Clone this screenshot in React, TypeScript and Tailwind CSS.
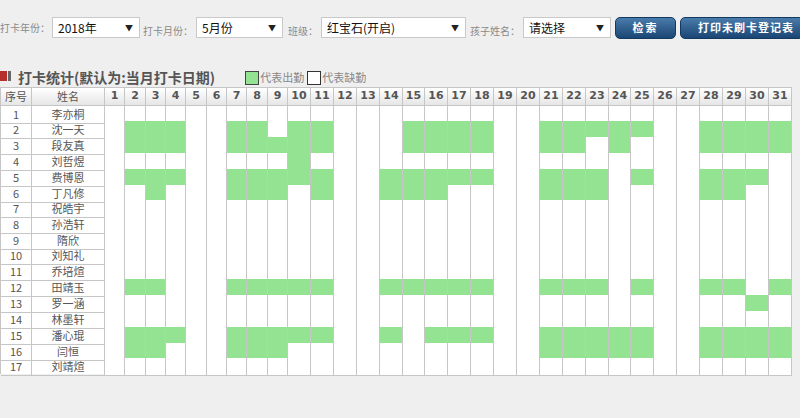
import React from "react";

const COLS =
  "grid grid-cols-[31px_73px_20px_21px_20px_20px_21px_20px_20px_21px_20px_23px_23px_23px_23px_23px_22px_23px_23px_23px_23px_23px_23px_23px_23px_22px_23px_23px_23px_23px_23px_23px_23px]";

const names = [
  "李亦桐", "沈一天", "段友真", "刘哲煜", "费博恩", "丁凡修", "祝皓宇", "孙浩轩", "隋欣",
  "刘知礼", "乔培煊", "田靖玉", "罗一涵", "林墨轩", "潘心琨", "闫恒", "刘靖煊",
];

const r = (a: number[]) => new Set(a);
const present: Set<number>[] = [
  r([]),
  r([2, 3, 4, 7, 8, 10, 11, 15, 16, 17, 18, 21, 22, 23, 24, 25, 28, 29, 30, 31]),
  r([2, 3, 4, 7, 8, 9, 10, 11, 15, 16, 17, 18, 21, 22, 24, 28, 29, 30, 31]),
  r([10]),
  r([2, 3, 4, 7, 8, 9, 10, 11, 14, 15, 16, 17, 18, 21, 22, 23, 25, 28, 29, 30]),
  r([3, 7, 8, 9, 11, 14, 15, 16, 21, 22, 23, 28, 29]),
  r([]),
  r([]),
  r([]),
  r([]),
  r([]),
  r([2, 3, 7, 8, 9, 10, 11, 14, 15, 16, 17, 18, 21, 22, 23, 25, 28, 29, 31]),
  r([30]),
  r([]),
  r([2, 3, 4, 7, 8, 9, 10, 11, 14, 16, 17, 18, 21, 22, 23, 24, 25, 28, 29, 30, 31]),
  r([2, 3, 7, 8, 9, 21, 22, 23, 24, 25, 28, 29, 30, 31]),
  r([]),
];

const rowH = [
  "h-[15px]", "h-[16px]", "h-[16px]", "h-[16px]", "h-[16px]", "h-[15px]", "h-[16px]", "h-[16px]",
  "h-[15px]", "h-[16px]", "h-[16px]", "h-[16px]", "h-[16px]", "h-[16px]", "h-[16px]", "h-[15px]", "h-[16px]",
];

const days = Array.from({ length: 31 }, (_, i) => i + 1);

function Select({ w, text }: { w: string; text: string }) {
  return (
    <div
      className={`${w} h-[21px] bg-white border border-[#c9c9c9] flex items-center justify-between pl-[5px] pr-[6px] text-[12px] text-[#111]`}
    >
      <span>{text}</span>
      <span className="text-[8px] text-[#222]">▼</span>
    </div>
  );
}

function Label({ text }: { text: string }) {
  return <span className="text-[10px] text-[#8a8a8a] whitespace-nowrap">{text}</span>;
}

export default function App() {
  return (
    <div
      className="w-[800px] h-[418px] overflow-hidden bg-[#efefef]"
      style={{ fontFamily: '"Noto Sans CJK SC", "Noto Sans", sans-serif' }}
    >
      <div className="flex items-center pt-[17px] h-[38px] whitespace-nowrap">
        <Label text="打卡年份：" />
        <div className="ml-[2px]">
          <Select w="w-[88px]" text="2018年" />
        </div>
        <div className="ml-[3px]">
          <Label text="打卡月份：" />
        </div>
        <div className="ml-[3px]">
          <Select w="w-[87px]" text="5月份" />
        </div>
        <div className="ml-[5px]">
          <Label text="班级：" />
        </div>
        <div className="ml-[3px]">
          <Select w="w-[145px]" text="红宝石(开启)" />
        </div>
        <div className="ml-[4px]">
          <Label text="孩子姓名：" />
        </div>
        <div className="ml-[3px]">
          <Select w="w-[88px]" text="请选择" />
        </div>
        <button className="ml-[4px] w-[61px] h-[22px] rounded-[5px] border border-[#123a60] bg-gradient-to-b from-[#4a7cab] to-[#1a4674] text-white text-[11px] font-bold tracking-[2px] flex items-center justify-center shrink-0">
          检索
        </button>
        <button className="ml-[4px] w-[124px] h-[22px] rounded-[5px] border border-[#123a60] bg-gradient-to-b from-[#4a7cab] to-[#1a4674] text-white text-[11px] font-bold tracking-[1px] flex items-center justify-start pl-[17px] shrink-0">
          打印未刷卡登记表
        </button>
      </div>

      <div className="flex items-end mt-[30px] h-[19px]">
        <div className="flex items-center h-full pb-[3px]">
          <span className="w-[7px] h-[10px] bg-[#b8302c]" />
          <span className="ml-[1px] w-[3px] h-[10px] bg-[#666]" />
        </div>
        <span className="ml-[7px] text-[14px] font-bold text-[#555] leading-[19px]">
          打卡统计(默认为:当月打卡日期)
        </span>
        <div className="ml-[30px] flex items-center h-full">
          <span className="w-[14px] h-[14px] bg-[#93e392] border border-[#444]" />
          <span className="text-[11px] text-[#888] ml-[1px]">代表出勤</span>
          <span className="ml-[3px] w-[14px] h-[14px] bg-white border border-[#333]" />
          <span className="text-[11px] text-[#888] ml-[1px]">代表缺勤</span>
        </div>
      </div>

      <div className="w-[792px] border-l border-t border-[#c6c6c6] bg-white">
        <div
          className={`${COLS} h-[18px] bg-gradient-to-b from-[#ffffff] to-[#e4e4e4] text-[#555]`}
        >
          <div className="border-r border-b border-[#c6c6c6] flex items-center justify-center text-[11px]">
            序号
          </div>
          <div className="border-r border-b border-[#c6c6c6] flex items-center justify-center text-[11px]">
            姓名
          </div>
          {days.map((d) => (
            <div
              key={d}
              className="border-r border-b border-[#c6c6c6] flex items-center justify-center text-[11px] font-bold"
              style={{ fontFamily: '"DejaVu Sans", sans-serif' }}
            >
              {d}
            </div>
          ))}
        </div>
        {names.map((n, i) => (
          <div key={n} className={`${COLS} ${rowH[i]} text-[#555] text-[11px]`}>
            <div className="border-r border-b border-[#c6c6c6] flex items-center justify-center">
              {i + 1}
            </div>
            <div className="border-r border-b border-[#c6c6c6] flex items-center justify-center">
              {n}
            </div>
            {days.map((d) => (
              <div
                key={d}
                className={`border-r border-b border-[#c6c6c6] ${
                  present[i].has(d) ? "bg-[#93e392]" : "bg-white"
                }`}
              />
            ))}
          </div>
        ))}
      </div>
    </div>
  );
}
